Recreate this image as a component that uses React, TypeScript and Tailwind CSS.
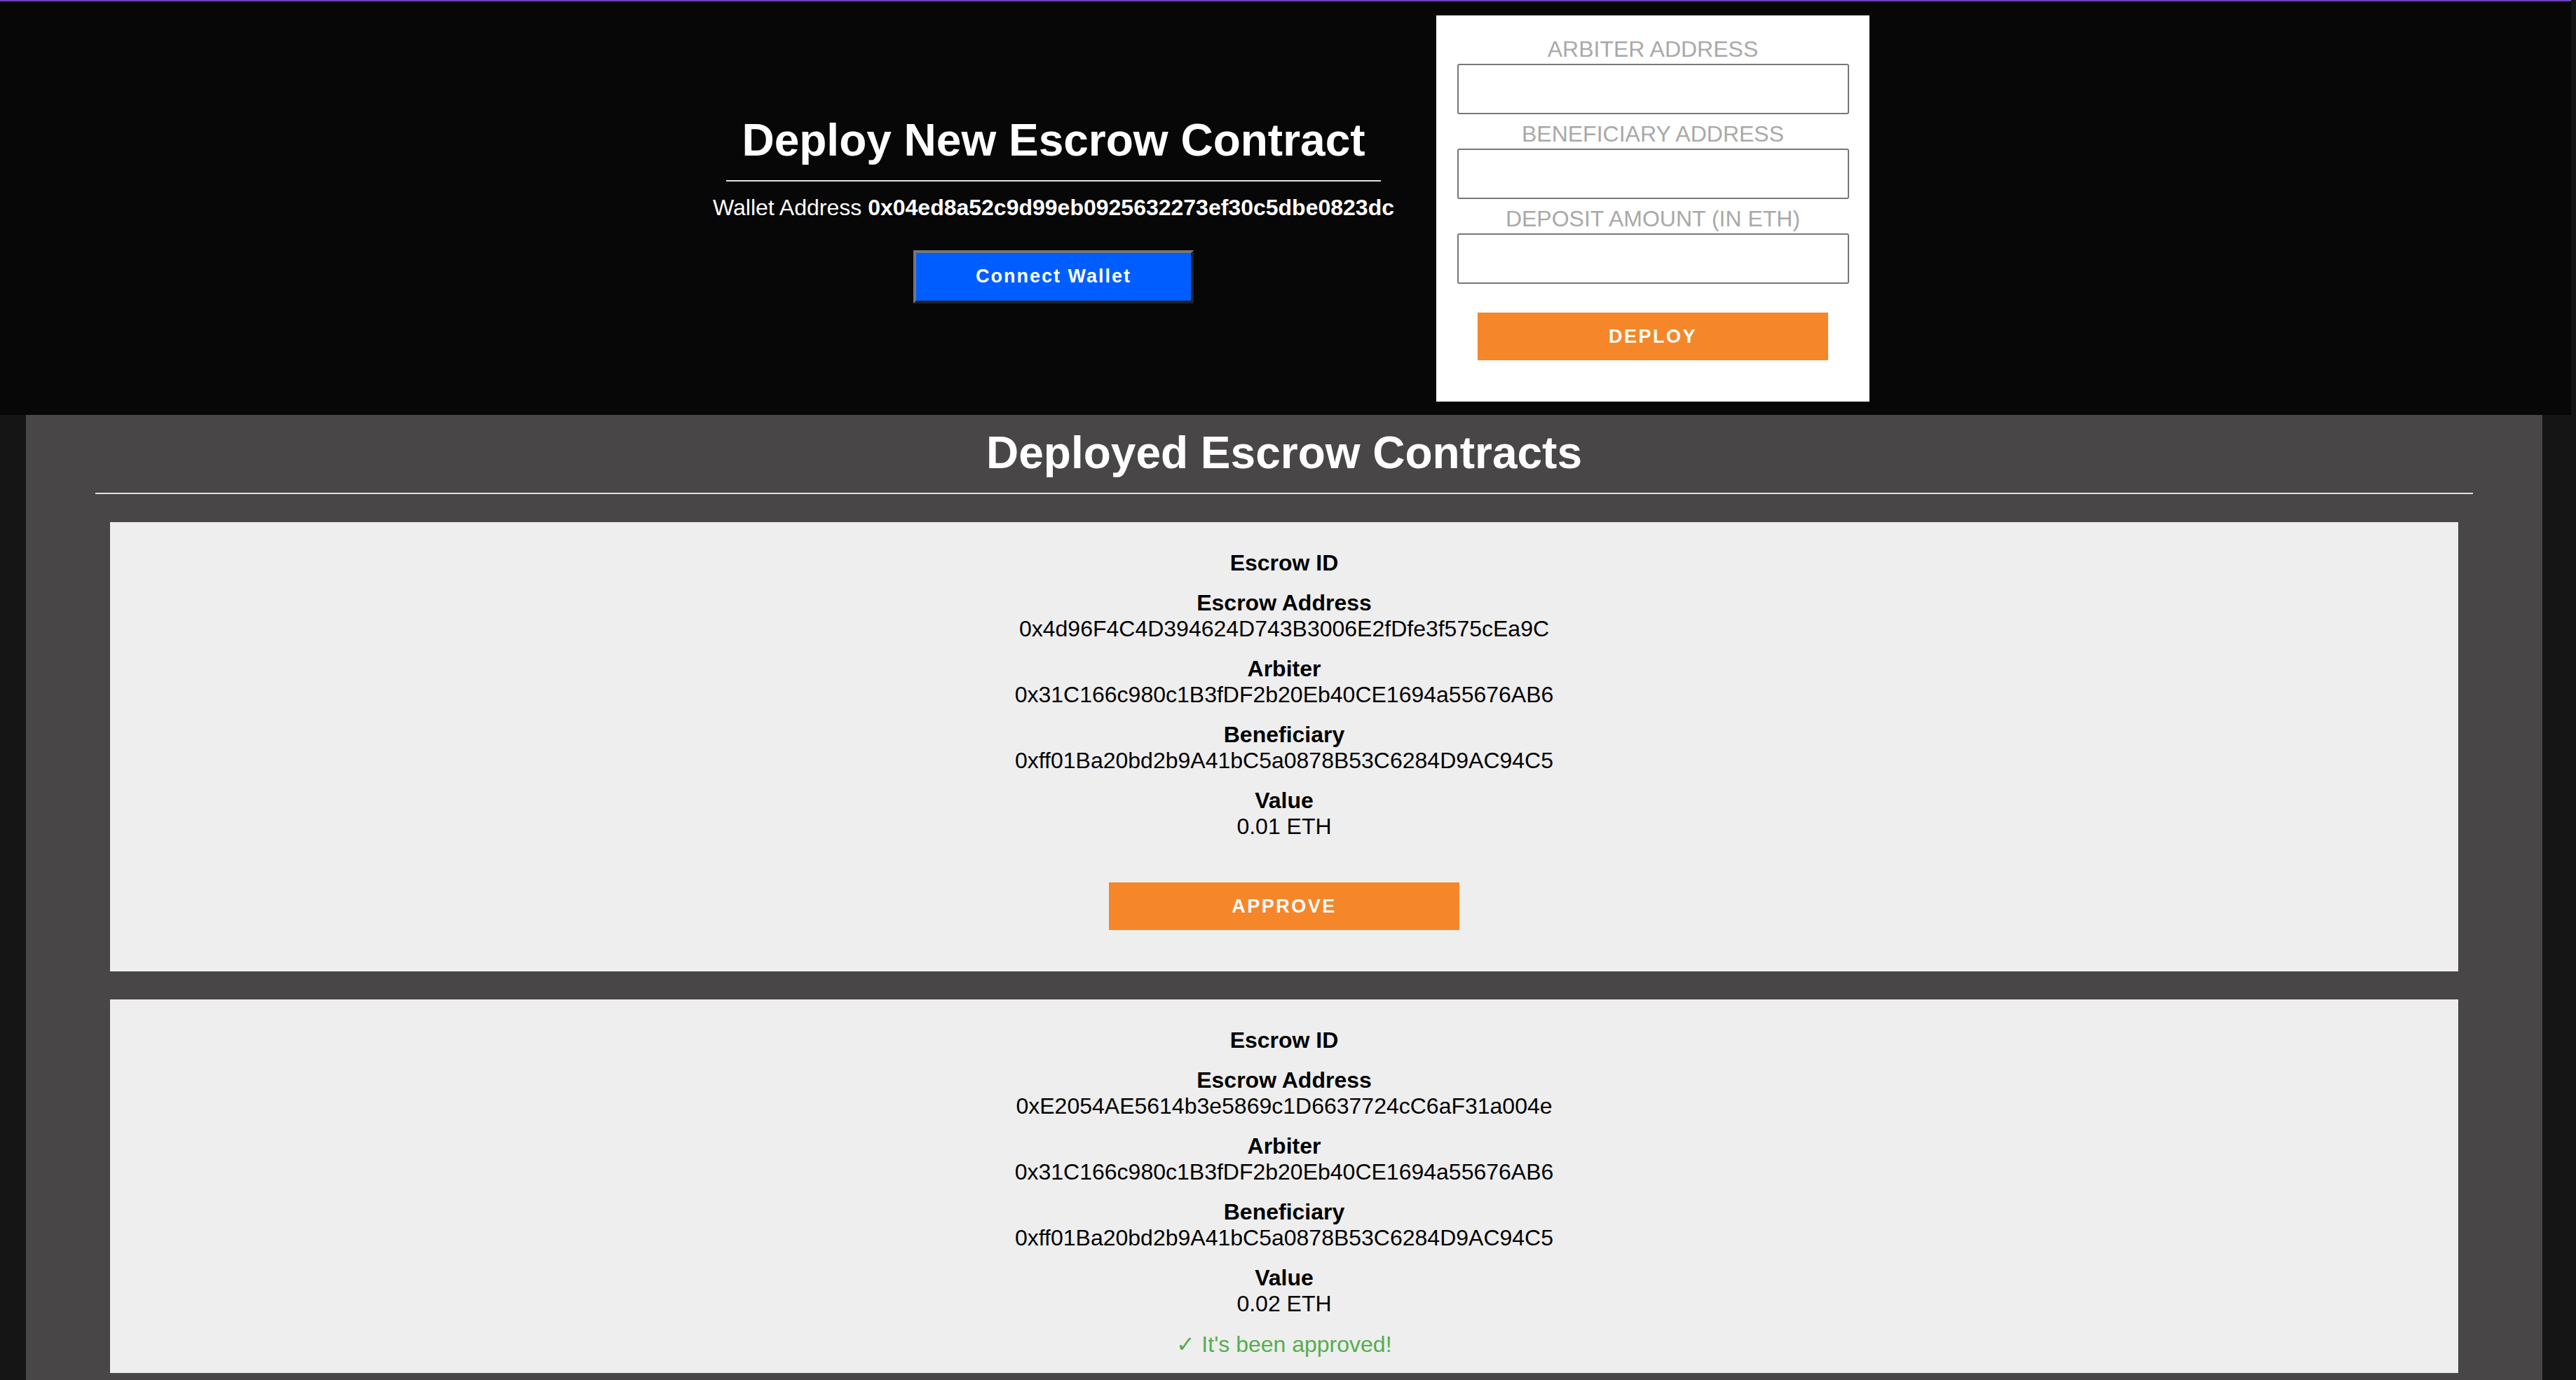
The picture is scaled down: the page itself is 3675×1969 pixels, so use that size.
import React from "react";

interface Escrow {
  address: string;
  arbiter: string;
  beneficiary: string;
  value: string;
  approved: boolean;
}

const escrows: Escrow[] = [
  {
    address: "0x4d96F4C4D394624D743B3006E2fDfe3f575cEa9C",
    arbiter: "0x31C166c980c1B3fDF2b20Eb40CE1694a55676AB6",
    beneficiary: "0xff01Ba20bd2b9A41bC5a0878B53C6284D9AC94C5",
    value: "0.01 ETH",
    approved: false,
  },
  {
    address: "0xE2054AE5614b3e5869c1D6637724cC6aF31a004e",
    arbiter: "0x31C166c980c1B3fDF2b20Eb40CE1694a55676AB6",
    beneficiary: "0xff01Ba20bd2b9A41bC5a0878B53C6284D9AC94C5",
    value: "0.02 ETH",
    approved: true,
  },
];

function Field({ label, value }: { label: string; value?: string }) {
  return (
    <div className="mb-[20px]">
      <div className="font-bold">{label}</div>
      {value && <div>{value}</div>}
    </div>
  );
}

function EscrowCard({ escrow }: { escrow: Escrow }) {
  return (
    <div className="bg-[#eeeeee] pt-[40px] pb-[2px] text-center text-[32px] leading-[normal] text-black">
      <Field label="Escrow ID" />
      <Field label="Escrow Address" value={escrow.address} />
      <Field label="Arbiter" value={escrow.arbiter} />
      <Field label="Beneficiary" value={escrow.beneficiary} />
      <Field label="Value" value={escrow.value} />
      {escrow.approved ? (
        <div className="mb-[20px] text-[#55ad4e]">✓ It's been approved!</div>
      ) : (
        <button className="mx-auto mt-[61px] mb-[57px] block h-[68px] w-[500px] bg-[#f5872a] text-[27px] font-bold tracking-[2.5px] text-white">
          APPROVE
        </button>
      )}
    </div>
  );
}

function FormLabel({ children, first }: { children: React.ReactNode; first?: boolean }) {
  return (
    <label className={`${first ? "" : "mt-[10px]"} text-[32px] leading-[normal] text-[#a9a9a9]`}>
      {children}
    </label>
  );
}

export default function App() {
  return (
    <div className="min-h-screen bg-[#151515] font-['Liberation_Sans',Arial,sans-serif]">
      {/* Header: deploy form */}
      <header className="mr-[7px] flex items-center justify-center gap-[44px] border-t-2 border-[#6f40c0] bg-[#070707] pt-[20px] pb-[19px]">
        <div className="flex w-[1004px] flex-col items-center text-white">
          <h1 className="text-[64px] font-bold leading-[normal]">Deploy New Escrow Contract</h1>
          <div className="mt-[20px] h-[2px] w-[934px] bg-[#e2e2e2]" />
          <p className="mt-[19px] text-[32px] leading-[normal]">
            Wallet Address <span className="font-bold">0x04ed8a52c9d99eb0925632273ef30c5dbe0823dc</span>
          </p>
          <button className="mt-[42px] h-[76px] w-[400px] border-4 border-t-[#777777] border-l-[#777777] border-b-[#222222] border-r-[#222222] bg-[#005dff] text-[27px] font-bold tracking-[2px] text-white">
            Connect Wallet
          </button>
        </div>

        <div className="flex w-[618px] flex-col items-center bg-white pt-[30px] pb-[59px]">
          <FormLabel first>ARBITER ADDRESS</FormLabel>
          <input className="mt-[2px] h-[72px] w-[559px] rounded-[3px] border-2 border-[#777777] bg-white" />
          <FormLabel>BENEFICIARY ADDRESS</FormLabel>
          <input className="mt-[2px] h-[72px] w-[559px] rounded-[3px] border-2 border-[#777777] bg-white" />
          <FormLabel>DEPOSIT AMOUNT (IN ETH)</FormLabel>
          <input className="mt-[2px] h-[72px] w-[559px] rounded-[3px] border-2 border-[#777777] bg-white" />
          <button className="mt-[41px] h-[68px] w-[500px] bg-[#f5872a] text-[27px] font-bold tracking-[2.5px] text-white">
            DEPLOY
          </button>
        </div>
      </header>

      {/* Existing contracts */}
      <main className="ml-[37px] mr-[48px] min-h-[1377px] bg-[#484646] pt-[17px] pb-[40px]">
        <h2 className="text-center text-[64px] font-bold leading-[normal] text-white">Deployed Escrow Contracts</h2>
        <div className="mx-[99px] mt-[20px] h-[2px] bg-[#e2e2e2]" />
        <div className="mx-[120px] mt-[40px] flex flex-col gap-[40px]">
          {escrows.map((e) => (
            <EscrowCard key={e.address} escrow={e} />
          ))}
        </div>
      </main>
    </div>
  );
}
